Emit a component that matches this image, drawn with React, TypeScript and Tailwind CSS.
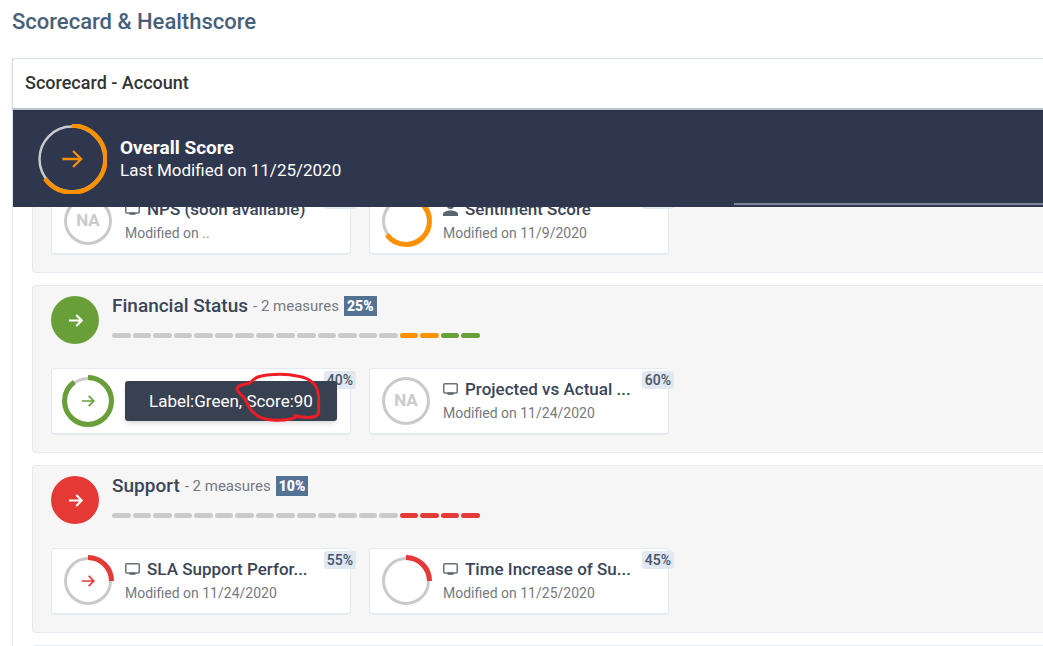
import type { ReactNode } from "react";

const GREY = "#cacaca";
const ORANGE = "#ff9100";
const GREEN = "#689f38";
const RED = "#e53935";

function Arrow({ color, size, width = 2 }: { color: string; size: number; width?: number }) {
  return (
    <svg width={size} height={size} viewBox="0 0 16 16" fill="none" stroke={color} strokeWidth={width} aria-hidden="true">
      <path d="M1 8H14.4M8.8 2.2L14.6 8L8.8 13.8" />
    </svg>
  );
}

function Ring({ size, radius, track, arc, value, color, children }: {
  size: number; radius: number; track: number; arc: number; value: number; color: string; children?: ReactNode;
}) {
  const c = size / 2;
  const r = radius + (arc - track) / 2;
  return (
    <div className="grid shrink-0 place-items-center">
      <svg className="col-start-1 row-start-1" width={size} height={size} aria-hidden="true">
        <circle cx={c} cy={c} r={radius} fill="none" stroke={GREY} strokeWidth={track} />
        {value > 0 && (
          <circle
            cx={c} cy={c} r={r} fill="none" stroke={color} strokeWidth={arc}
            pathLength={100} strokeDasharray={`${value} 100`} transform={`rotate(-90 ${c} ${c})`}
          />
        )}
      </svg>
      <div className="col-start-1 row-start-1 grid place-items-center">{children}</div>
    </div>
  );
}

function ScreenIcon() {
  return (
    <svg width="15" height="12" viewBox="0 0 15 12" className="shrink-0" aria-hidden="true">
      <rect x="0.75" y="0.75" width="13.5" height="9.2" rx="1" fill="none" stroke="#68737d" strokeWidth="1.5" />
      <path d="M4.5 9.6H10.5V11.8H4.5Z" fill="#5a6670" />
    </svg>
  );
}

function PersonIcon() {
  return (
    <svg width="15" height="14" viewBox="0 0 15 14" className="shrink-0" fill="#5a6670" aria-hidden="true">
      <circle cx="7.5" cy="3.5" r="3.5" />
      <path d="M0 14V12C0 9.6 4 8.4 7.5 8.4S15 9.6 15 12V14Z" />
    </svg>
  );
}

type Measure = {
  title?: string; modified?: string; weight: string; value: number; color: string;
  mark?: "NA" | "arrow"; person?: boolean; tooltip?: string;
};

function Tooltip({ text }: { text: string }) {
  return (
    <div role="tooltip" className="absolute top-3 left-[73px] z-10 rounded-[3px] bg-[#384152] px-6 py-2 text-[17px] leading-6 whitespace-nowrap text-white shadow-md">
      {text}
      <svg className="absolute -top-[9px] -right-1" width="110" height="52" viewBox="0 0 110 52" fill="none" stroke="#ee1c24" strokeWidth="3" strokeLinecap="round" strokeLinejoin="round" aria-hidden="true">
        <path d="M64 43.5C70 45.5 80 46 84 44.5C88 43 88 40 87.5 34C88 27 88 19 84 13C80 8 74 5 66 4C56 1.5 46 2 36 3C29 4 24 5 20 10C15 13 8 12.5 6 16C5 20 11 22 14 27C17 33 19 38 23 41C28 46 34 47.5 41 48C50 48.5 60 48 66 44.5" />
      </svg>
    </div>
  );
}

function MeasureCard({ m }: { m: Measure }) {
  return (
    <li className="relative flex h-[67px] w-[300px] items-center gap-[11px] rounded border border-b-2 border-[#e4eaf0] bg-white pl-[10px]">
      <Ring size={52} radius={22.5} track={3} arc={5} value={m.value} color={m.color}>
        {m.mark === "NA" && <span className="text-[17px] font-bold text-[#cacaca]">NA</span>}
        {m.mark === "arrow" && <Arrow color={m.color} size={14} width={1.9} />}
      </Ring>
      {m.title && (
        <div className="min-w-0">
          <h3 className="flex items-center gap-[7px] text-[17px] leading-6 font-medium whitespace-nowrap text-[#3b4557]">
            {m.person ? <PersonIcon /> : <ScreenIcon />}
            {m.title}
          </h3>
          <p className="text-sm leading-6 text-[#76797f]">{m.modified}</p>
        </div>
      )}
      <span className="absolute top-0.5 -right-1.5 rounded-[3px] bg-[#e1e8f0] px-[3px] text-sm leading-[18px] font-medium text-[#44556b]">
        {m.weight}
      </span>
      {m.tooltip && <Tooltip text={m.tooltip} />}
    </li>
  );
}

function Measures({ items }: { items: Measure[] }) {
  return (
    <ul className="flex gap-[18px]">
      {items.map((m) => <MeasureCard key={m.weight} m={m} />)}
    </ul>
  );
}

const panel = "rounded-l border border-r-0 border-[#e4eaf0] bg-[#f6f6f6] px-[18px] pb-[17px]";

function Group({ name, share, color, history, items }: {
  name: string; share: string; color: string; history: string[]; items: Measure[];
}) {
  return (
    <section className={panel}>
      <div className="flex items-end gap-[13px] pt-[10px] pb-6">
        <div className="grid size-12 shrink-0 place-items-center rounded-full" style={{ backgroundColor: color }}>
          <Arrow color="#ffffff" size={15} width={2.3} />
        </div>
        <div className="self-start">
          <div className="flex items-center gap-[5px]">
            <h2 className="text-[19px] leading-5 font-medium text-[#3b4557]">{name}</h2>
            <span className="text-[15px] leading-5 text-[#76797f]">- 2 measures</span>
            <span className="bg-[#547294] px-[3px] text-sm leading-5 font-black text-white">{share}</span>
          </div>
          <div className="mt-[17px] grid w-[368px] grid-cols-18 gap-0.5">
            {history.map((c, i) => (
              <span key={i} className="h-[5px] rounded-full" style={{ backgroundColor: c }} />
            ))}
          </div>
        </div>
      </div>
      <Measures items={items} />
    </section>
  );
}

const idle = Array<string>(14).fill(GREY);

export default function App() {
  return (
    <main className="h-screen overflow-hidden bg-white pl-3 font-[Roboto,sans-serif]">
      <h1 className="pt-2 pb-[22px] text-[22px] leading-7 font-medium text-[#47607a]">Scorecard &amp; Healthscore</h1>
      <div className="border-l border-[#dfe6ee]">
        <header className="relative z-20 -ml-px rounded-tl border border-r-0 border-b-2 border-[#d5dde6] border-b-[#b9c3cf] bg-white pt-[11px] pb-[13px] pl-3 shadow-sm">
          <h2 className="text-lg leading-[25px] font-medium text-[#333333]">Scorecard - Account</h2>
        </header>
        <section className="relative z-10 flex h-[97px] items-center gap-[13px] bg-[#2f374e] pl-6">
          <Ring size={70} radius={32.5} track={2.5} arc={4.5} value={65} color={ORANGE}>
            <Arrow color={ORANGE} size={22} width={1.7} />
          </Ring>
          <div>
            <h2 className="text-[19px] leading-[22px] font-bold text-white">Overall Score</h2>
            <p className="text-[17px] leading-[22px] text-white">Last Modified on 11/25/2020</p>
          </div>
          <span className="absolute right-0 bottom-0.5 left-[70%] h-0.5 bg-[#7d8496]" />
        </section>
        <div className="flex flex-col gap-3 pl-[19px]">
          <section className={`-mt-10 pt-5 ${panel}`}>
            <Measures
              items={[
                { title: "NPS (soon available)", modified: "Modified on ..", weight: "50%", value: 0, color: GREY, mark: "NA" },
                { title: "Sentiment Score", modified: "Modified on 11/9/2020", weight: "40%", value: 65, color: ORANGE, person: true },
              ]}
            />
          </section>
          <Group
            name="Financial Status" share="25%" color={GREEN} history={[...idle, ORANGE, ORANGE, GREEN, GREEN]}
            items={[
              { weight: "40%", value: 90, color: GREEN, mark: "arrow", tooltip: "Label:Green, Score:90" },
              { title: "Projected vs Actual ...", modified: "Modified on 11/24/2020", weight: "60%", value: 0, color: GREY, mark: "NA" },
            ]}
          />
          <Group
            name="Support" share="10%" color={RED} history={[...idle, RED, RED, RED, RED]}
            items={[
              { title: "SLA Support Perfor...", modified: "Modified on 11/24/2020", weight: "55%", value: 25, color: RED, mark: "arrow" },
              { title: "Time Increase of Su...", modified: "Modified on 11/25/2020", weight: "45%", value: 25, color: RED },
            ]}
          />
          <section className={panel} />
        </div>
      </div>
    </main>
  );
}
